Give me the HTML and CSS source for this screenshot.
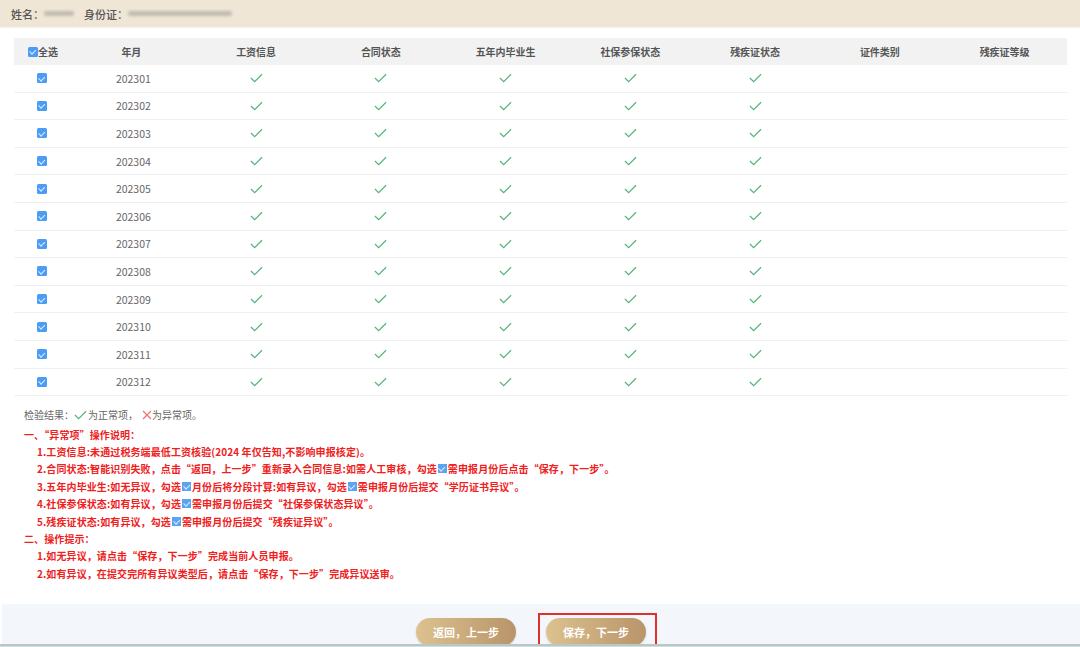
FILE: index.html
```html
<!DOCTYPE html>
<html lang="zh">
<head>
<meta charset="utf-8">
<link rel="stylesheet" href="styles.css">
</head>
<body>
<div class="topbar">
  <span class="lbl">姓名：</span><span class="blur b-name"></span>
  <span class="lbl id">身份证：</span><span class="blur b-id"></span>
</div>

<div class="table">
  <div class="row head">
    <div class="c c0"><span class="cb"></span>全选</div>
    <div class="c">年月</div>
    <div class="c">工资信息</div>
    <div class="c">合同状态</div>
    <div class="c">五年内毕业生</div>
    <div class="c">社保参保状态</div>
    <div class="c">残疾证状态</div>
    <div class="c">证件类别</div>
    <div class="c">残疾证等级</div>
  </div>
  <div id="rows"></div>
</div>

<div class="notes">
  <div class="legend">检验结果：<svg class="ok" viewBox="0 0 14 10" width="13" height="10"><polyline points="1,5 5,9 13,1"/></svg>为正常项，<svg class="bad" viewBox="0 0 10 10" width="10" height="10"><path d="M1 1L9 9M9 1L1 9"/></svg> 为异常项。</div>
  <div class="h">一、“异常项”操作说明：</div>
  <div class="i">1.工资信息:未通过税务端最低工资核验(2024 年仅告知,不影响申报核定)。</div>
  <div class="i">2.合同状态:智能识别失败，点击“返回，上一步”重新录入合同信息:如需人工审核，勾选<span class="mini"></span>需申报月份后点击“保存，下一步”。</div>
  <div class="i">3.五年内毕业生:如无异议，勾选<span class="mini"></span>月份后将分段计算:如有异议，勾选<span class="mini"></span>需申报月份后提交“学历证书异议”。</div>
  <div class="i">4.社保参保状态:如有异议，勾选<span class="mini"></span>需申报月份后提交“社保参保状态异议”。</div>
  <div class="i">5.残疾证状态:如有异议，勾选<span class="mini"></span>需申报月份后提交“残疾证异议”。</div>
  <div class="h">二、操作提示：</div>
  <div class="i">1.如无异议，请点击“保存，下一步”完成当前人员申报。</div>
  <div class="i">2.如有异议，在提交完所有异议类型后，请点击“保存，下一步”完成异议送审。</div>
</div>

<div class="footer">
  <div class="btns">
    <span class="btn">返回，上一步</span>
    <span class="mark"><span class="btn">保存，下一步</span></span>
  </div>
</div>
<div class="bottomline"></div>

<script>
(function(){
  var ck='<svg class="ok" viewBox="0 0 14 10" width="13" height="10"><polyline points="1,5 5,9 13,1"/></svg>';
  var html='';
  for(var m=1;m<=12;m++){
    var ym='2023'+(m<10?'0'+m:m);
    html+='<div class="row"><div class="c c0"><span class="cb"></span></div><div class="c num">'+ym+'</div>';
    for(var k=0;k<5;k++) html+='<div class="c">'+ck+'</div>';
    html+='<div class="c"></div><div class="c"></div></div>';
  }
  document.getElementById('rows').innerHTML=html;
})();
</script>
</body>
</html>
```

FILE: styles.css
```css
* { box-sizing: border-box; }
html, body { margin: 0; padding: 0; background: #fff; }
body {
  width: 1080px; height: 647px; overflow: hidden;
  font-family: "Noto Sans CJK SC", "Liberation Sans", sans-serif;
  color: #555;
}
.topbar {
  height: 27px;
  background: #efe6d6;
  display: flex; align-items: center;
  padding-left: 11px;
  font-size: 11px;
  color: #555;
  box-shadow: 0 1px 2px rgba(0,0,0,0.06);
}
.topbar .lbl { font-weight: 500; }
.topbar .id { margin-left: 10px; }
.blur { display: inline-block; height: 5px; background: #b5b0a8; filter: blur(1.6px); border-radius: 2px; opacity: 0.8; }
.b-name { width: 30px; }
.b-id { width: 104px; }

.table { margin: 11px 13px 0 14px; }
.row {
  display: grid;
  grid-template-columns: 55px repeat(8, 1fr);
  height: 27.6px;
  border-bottom: 1px solid #f0f0f0;
  align-items: center;
}
.row.head { background: #f2f2f2; border-bottom: none; height: 27px; font-size: 10px; font-weight: 700; color: #555; }
.c { display: flex; justify-content: center; align-items: center; }
.head .c0 { justify-content: flex-start; padding-left: 14px; }
.num { font-size: 10.5px; color: #666; padding-left: 4px; }
.cb {
  display: inline-block; width: 10px; height: 10px;
  background: #4a9cf5; border-radius: 1.5px; position: relative;
}
.cb::after, .mini::after {
  content: ""; position: absolute; left: 3px; top: 1.5px;
  width: 2.5px; height: 4.5px;
  border: solid #dbeaff; border-width: 0 1px 1px 0;
  transform: rotate(45deg);
}
.ok polyline { fill: none; stroke: #55b47a; stroke-width: 1.3; }
.bad path { fill: none; stroke: #f07070; stroke-width: 1.2; }

.notes { margin: 10px 0 0 24px; font-size: 10px; line-height: 17.4px; }
.legend { color: #666; display: flex; align-items: center; margin-bottom: 2px; }
.legend .ok { margin-right: 1px; }
.legend .bad { margin-left: 4px; }
.h, .i { color: #f0201c; font-weight: 700; letter-spacing: 0.1px; }
.i { padding-left: 13px; }
.mini {
  display: inline-block; width: 9px; height: 9px; background: #5aa4f2;
  position: relative; vertical-align: 0px; margin: 0 1px;
}
.mini::after { left: 2.6px; top: 1px; }

.footer {
  margin: 22px 0 0 2px;
  height: 40px;
  background: #f3f7fc;
  position: relative;
}
.btns { display: flex; justify-content: center; gap: 30px; padding: 14px 20px 0 0; }
.btn {
  display: inline-flex; justify-content: center; align-items: center;
  width: 100px; height: 28px; border-radius: 14px;
  background: linear-gradient(90deg, #dcc28f, #b8946a);
  color: #fff; font-size: 11px; font-weight: 700;
  box-shadow: 0 1px 2px rgba(120,90,40,0.25);
}
.mark { position: relative; display: inline-block; }
.mark::after {
  content: ""; position: absolute; left: -8px; right: -11px; top: -5px; height: 40px;
  border: 2px solid #e0302c; pointer-events: none;
}
.bottomline { height: 4px; border-top: 2px solid #bcc6c6; background: #cde0e0; position: relative; z-index: 1; }
```
